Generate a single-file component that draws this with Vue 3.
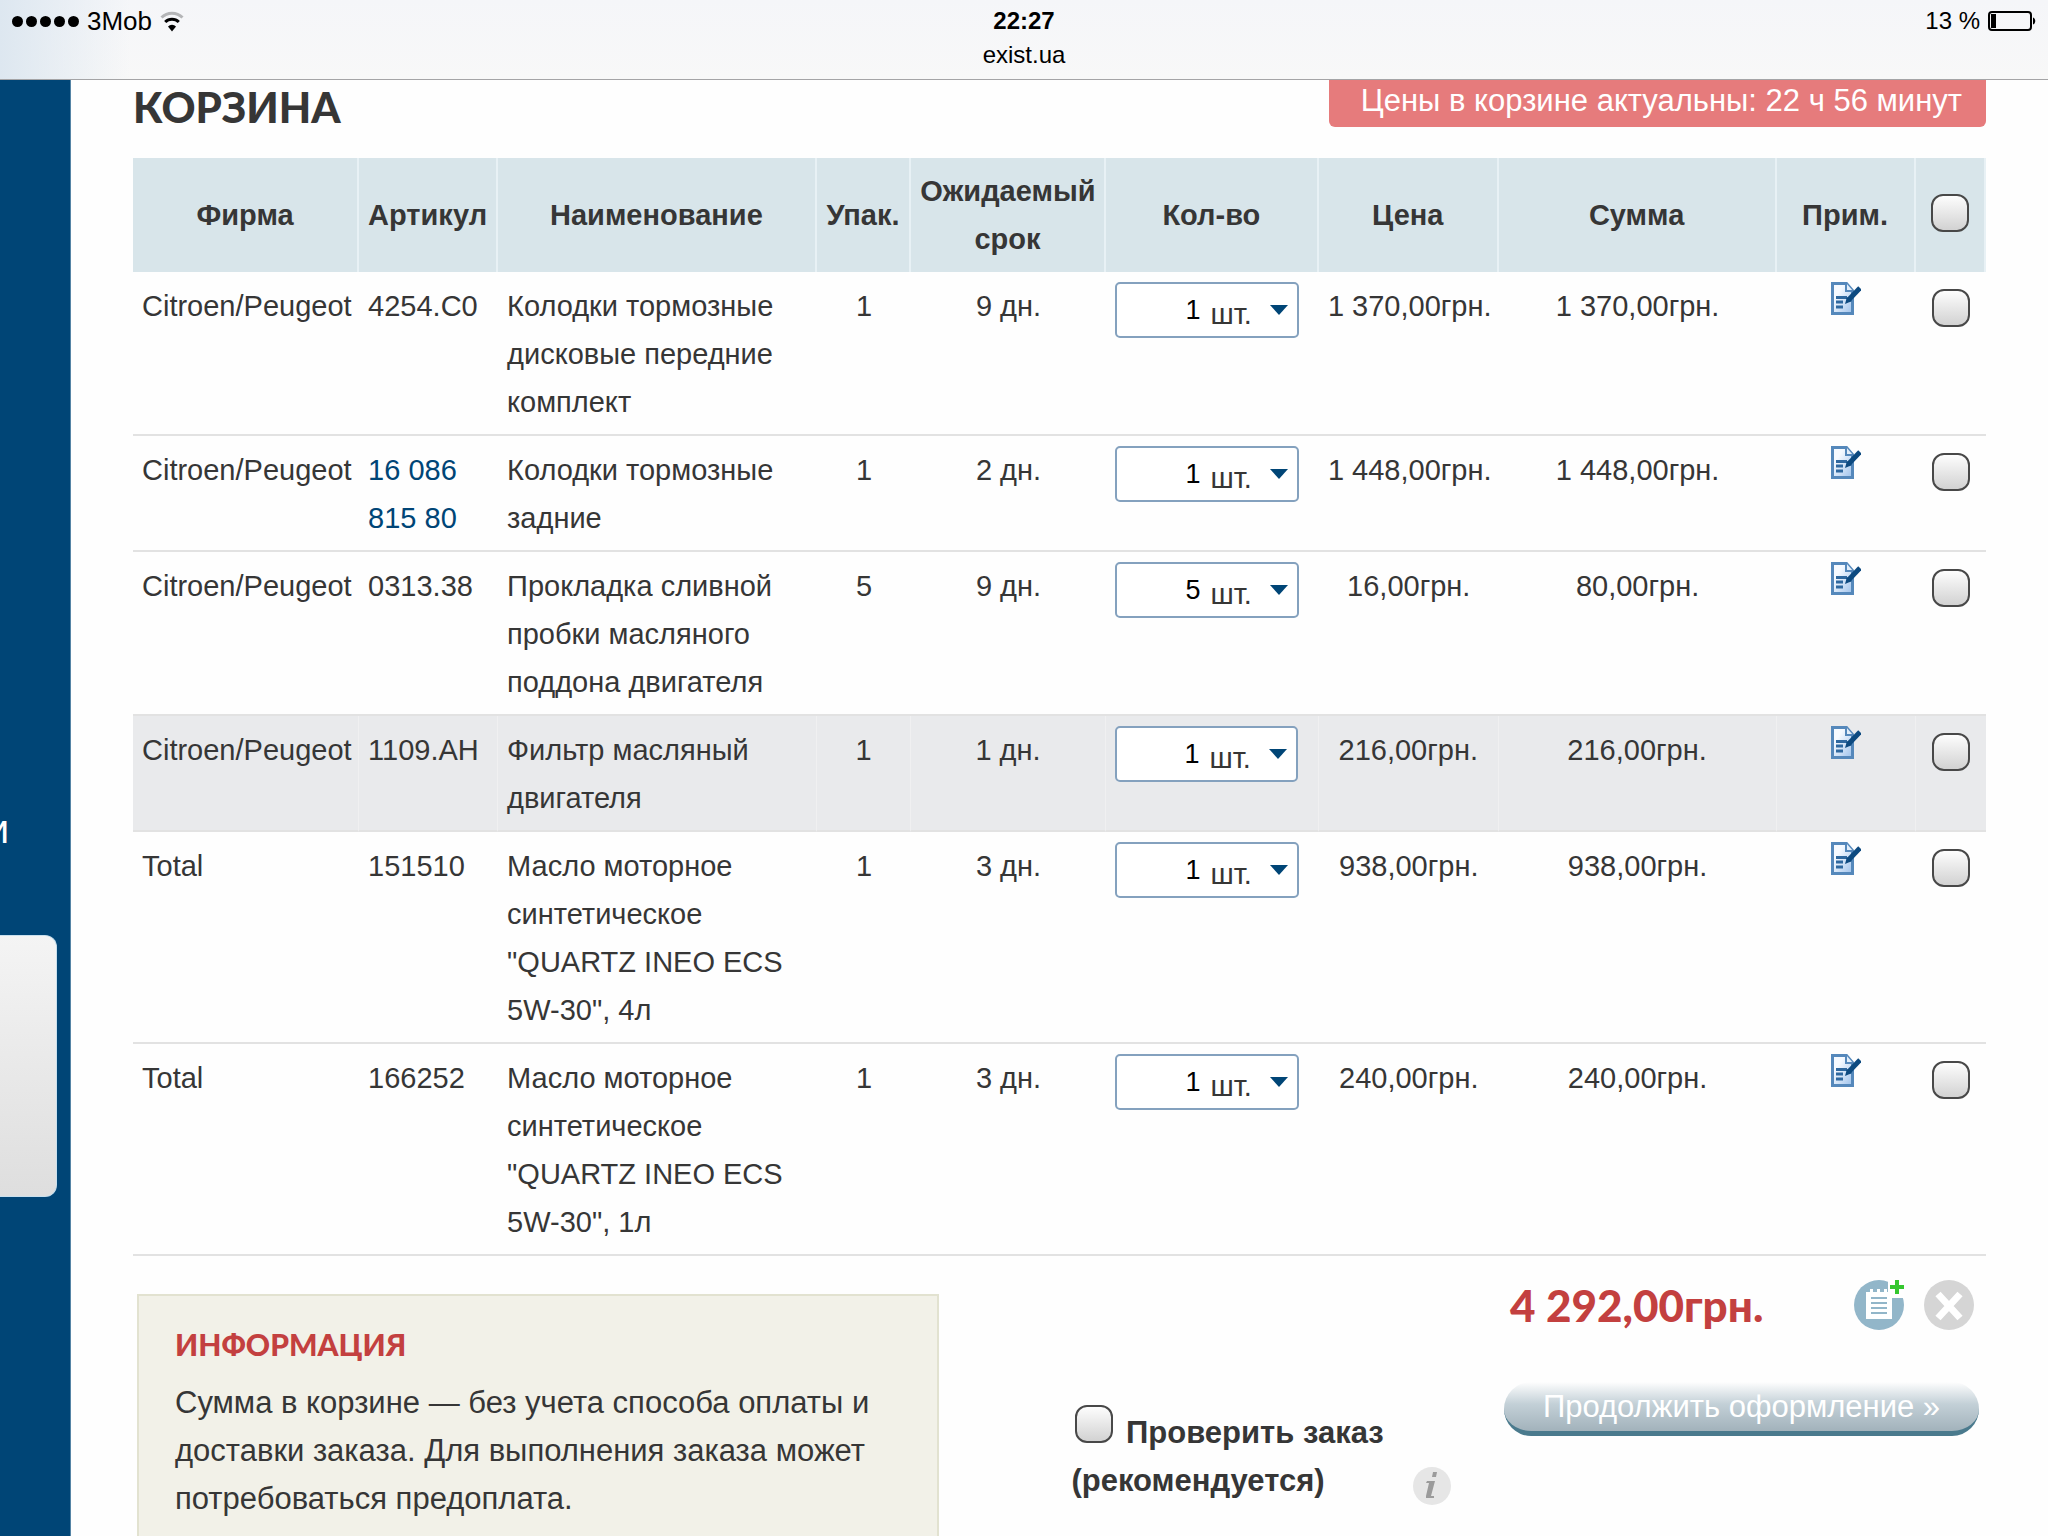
<template>
  <div class="screen">
    <header class="browser-bar">
      <div class="status">
        <div class="carrier">
          <span class="signal"><i v-for="n in 5" :key="n"></i></span>
          <span>3Mob</span>
          <svg class="wifi" viewBox="0 0 24 24" width="24" height="24" aria-hidden="true">
            <path d="M1.5 8.5a15 15 0 0 1 21 0" fill="none" stroke="#b4b5b7" stroke-width="3" />
            <path d="M5.2 13a9.6 9.6 0 0 1 13.6 0" fill="none" stroke="#000" stroke-width="3" />
            <path d="M12 22.5l-4-5a5.6 5.6 0 0 1 8 0z" />
          </svg>
        </div>
        <strong class="clock">22:27</strong>
        <div class="battery">
          <span>13 %</span>
          <svg viewBox="0 0 48 20" width="48" height="20" aria-hidden="true">
            <rect x="1" y="1" width="42" height="18" rx="3" fill="none" stroke="#000" stroke-width="2" />
            <rect x="3" y="3" width="5" height="14" />
            <path d="M45 6.5c3 1 3 6 0 7z" />
          </svg>
        </div>
      </div>
      <div class="address">exist.ua</div>
    </header>

    <div class="page">
      <aside class="sidebar">
        <div class="sidebar-label">и</div>
        <div class="sidebar-card"></div>
      </aside>

      <main class="content">
        <div class="title-row">
          <h1>КОРЗИНА</h1>
          <div class="notice">Цены в корзине актуальны: 22 ч 56 минут</div>
        </div>

        <table class="cart">
          <colgroup>
            <col v-for="(width, i) in columns" :key="i" :style="{ width: width + '%' }" />
          </colgroup>
          <thead>
            <tr>
              <th>Фирма</th>
              <th>Артикул</th>
              <th>Наименование</th>
              <th>Упак.</th>
              <th>Ожидаемый срок</th>
              <th>Кол-во</th>
              <th>Цена</th>
              <th>Сумма</th>
              <th>Прим.</th>
              <th class="check"><input v-model="allSelected" type="checkbox" aria-label="Выбрать все" /></th>
            </tr>
          </thead>
          <tbody>
            <tr v-for="item in items" :key="item.id" :class="{ active: item.active }">
              <td class="nowrap">{{ item.firm }}</td>
              <td>
                <a v-if="item.link" href="#">{{ item.article }}</a>
                <template v-else>{{ item.article }}</template>
              </td>
              <td>{{ item.name }}</td>
              <td class="center">{{ item.pack }}</td>
              <td class="center">{{ item.term }}</td>
              <td class="qty-cell">
                <div class="qty">
                  <input v-model="item.qty" type="text" aria-label="Количество" />
                  <span class="unit">шт.</span>
                  <button type="button" class="arrow" aria-label="Изменить количество">
                    <svg viewBox="0 0 18 10" width="18" height="10"><path d="M0 0h18l-9 10z" fill="#004576" /></svg>
                  </button>
                </div>
              </td>
              <td class="center nowrap">{{ item.price }}</td>
              <td class="center nowrap">{{ item.sum }}</td>
              <td class="note-cell">
                <button type="button" class="icon-button" aria-label="Примечание">
                  <svg viewBox="0 0 30 33" width="30" height="33">
                    <defs>
                      <linearGradient id="sheet" x1="0" y1="0" x2="1" y2="1">
                        <stop offset="0.3" stop-color="#f6faff" />
                        <stop offset="1" stop-color="#9cc0ea" />
                      </linearGradient>
                    </defs>
                    <path d="M1.5 1.5h14l6 7v23h-20z" fill="url(#sheet)" stroke="#5588bb" stroke-width="3" />
                    <path d="M15 1v8h7" fill="#e4effa" stroke="#5588bb" stroke-width="2" />
                    <path d="M5 15.5h11M5 20h7M5 25h7" stroke="#2f689f" stroke-width="3" />
                    <path d="M29 6L17 18.500" stroke="#0d4a80" stroke-width="5" />
                    <path d="M16 15l-2 7 7-3z" fill="#0d4a80" />
                  </svg>
                </button>
              </td>
              <td class="check"><input v-model="item.selected" type="checkbox" :aria-label="'Выбрать ' + item.article" /></td>
            </tr>
          </tbody>
        </table>

        <div class="summary">
          <section class="info">
            <h2>ИНФОРМАЦИЯ</h2>
            <p>Сумма в корзине — без учета способа оплаты и доставки заказа. Для выполнения заказа может потребоваться предоплата.</p>
          </section>

          <div class="verify">
            <label for="verify">
              <input id="verify" v-model="verify" type="checkbox" />
              Проверить заказ (рекомендуется)
            </label>
            <button type="button" class="icon-button" aria-label="Подсказка">
              <svg viewBox="0 0 38 38" width="38" height="38">
                <circle cx="19" cy="19" r="19" fill="#e6e6e6" />
                <path d="M20 5h4l-1 5h-4z" fill="#9b9b9b" />
                <path d="M14 14h8l-4 15h3v2h-8v-2l3-13h-3z" fill="#9b9b9b" />
              </svg>
            </button>
          </div>

          <div class="checkout">
            <div class="total-row">
              <strong class="total">4 292,00грн.</strong>
              <button type="button" class="icon-button" aria-label="Сохранить список">
                <svg viewBox="0 0 50 50" width="50" height="50">
                  <circle cx="25" cy="25" r="25" fill="#92b6c9" />
                  <path d="M34 0h16v18H38v-4h-4z" fill="#fff" />
                  <path d="M12 12h4v-3h3v3h4v-3h3v3h4v-3h3v3h5v27H12z" fill="#fff" />
                  <path d="M17 18h16M17 23h16M17 28h16M17 33h16" stroke="#92b6c9" stroke-width="2" />
                  <path d="M41 0h4v5h5v4h-5v5h-4V9h-5V5h5z" fill="#35c72f" />
                </svg>
              </button>
              <button type="button" class="icon-button" aria-label="Удалить">
                <svg viewBox="0 0 50 50" width="50" height="50">
                  <circle cx="25" cy="25" r="25" fill="#d5d5d5" />
                  <path d="M14 14l22 24M36 14L14 38" stroke="#fff" stroke-width="7" />
                </svg>
              </button>
            </div>
            <button type="button" class="proceed">Продолжить оформление »</button>
          </div>
        </div>
      </main>
    </div>
  </div>
</template>

<script setup>
import { ref } from "vue";

const allSelected = ref(false);
const verify = ref(false);

// Column widths, percent of the table
const columns = [12.2, 7.5, 17.2, 5.1, 10.5, 11.5, 9.7, 15, 7.5, 3.8];

const items = ref([
  { id: 1, firm: "Citroen/Peugeot", article: "4254.C0", name: "Колодки тормозные дисковые передние комплект", pack: 1, term: "9 дн.", qty: 1, price: "1 370,00грн.", sum: "1 370,00грн.", selected: false },
  { id: 2, firm: "Citroen/Peugeot", article: "16 086 815 80", link: true, name: "Колодки тормозные задние", pack: 1, term: "2 дн.", qty: 1, price: "1 448,00грн.", sum: "1 448,00грн.", selected: false },
  { id: 3, firm: "Citroen/Peugeot", article: "0313.38", name: "Прокладка сливной пробки масляного поддона двигателя", pack: 5, term: "9 дн.", qty: 5, price: "16,00грн.", sum: "80,00грн.", selected: false },
  { id: 4, firm: "Citroen/Peugeot", article: "1109.AH", name: "Фильтр масляный двигателя", pack: 1, term: "1 дн.", qty: 1, price: "216,00грн.", sum: "216,00грн.", selected: false, active: true },
  { id: 5, firm: "Total", article: "151510", name: "Масло моторное синтетическое \"QUARTZ INEO ECS 5W-30\", 4л", pack: 1, term: "3 дн.", qty: 1, price: "938,00грн.", sum: "938,00грн.", selected: false },
  { id: 6, firm: "Total", article: "166252", name: "Масло моторное синтетическое \"QUARTZ INEO ECS 5W-30\", 1л", pack: 1, term: "3 дн.", qty: 1, price: "240,00грн.", sum: "240,00грн.", selected: false },
]);
</script>

<style>
html,
body,
#app {
  height: 100%;
}
body {
  margin: 0;
  background: #fefefe;
}
</style>

<style scoped>
.screen {
  display: flex;
  flex-direction: column;
  height: 100%;
  overflow: hidden;
  color: #363636;
  font-family: "Liberation Sans", Arial, sans-serif;
  font-size: 29px;
  line-height: 48px;
}
* {
  box-sizing: border-box;
}

/* Browser bar */
.browser-bar {
  flex: none;
  height: 80px;
  border-bottom: 1px solid #a4a4a6;
  background: linear-gradient(90deg, #dde7f0 0, rgba(247, 247, 248, 0) 130px), linear-gradient(#f5f6f9, #f8f8f8);
  color: #000;
  font-size: 24px;
  line-height: 34px;
}
.status {
  display: grid;
  grid-template-columns: 1fr auto 1fr;
  align-items: center;
  height: 42px;
  padding: 0 12px;
}
.carrier,
.battery,
.signal {
  display: flex;
  align-items: center;
}
.carrier {
  gap: 8px;
  font-size: 26px;
}
.signal {
  gap: 3px;
}
.signal i {
  width: 11px;
  height: 11px;
  border-radius: 50%;
  background: #000;
}
.battery {
  justify-content: flex-end;
  gap: 8px;
}
.address {
  line-height: 26px;
  text-align: center;
}

/* Page */
.page {
  display: flex;
  flex: 1;
  min-height: 0;
}
.sidebar {
  display: flex;
  flex: none;
  flex-direction: column;
  align-items: flex-start;
  width: 71px;
  padding-top: 725px;
  border-right: 1px solid #5584a5;
  background: #004576;
  overflow: hidden;
}
.sidebar-label {
  display: flex;
  justify-content: flex-end;
  width: 9px;
  color: #fff;
  font-size: 40px;
}
.sidebar-card {
  width: 57px;
  height: 262px;
  margin-top: 82px;
  border: 1px solid #c9e0ee;
  border-left: 0;
  border-radius: 0 12px 12px 0;
  background: linear-gradient(#f4f4f4, #dedede);
}
.content {
  flex: 1;
  min-width: 0;
  padding: 0 62px;
}
.title-row {
  display: flex;
  justify-content: space-between;
  align-items: flex-start;
  height: 78px;
}
h1,
h2,
.total {
  font-family: Lato, "Open Sans", sans-serif;
  font-weight: 900;
}
h1 {
  margin: 0;
  font-size: 42px;
  line-height: 54px;
}
.notice {
  height: 47px;
  padding: 0 24px 0 32px;
  border-radius: 0 0 6px 6px;
  background: #e67b7c;
  color: #fff;
  font-size: 31px;
  line-height: 42px;
}

/* Cart */
.cart {
  width: 100%;
  border-collapse: separate;
  border-spacing: 0;
  table-layout: fixed;
}
th {
  height: 114px;
  padding: 9px;
  border-right: 2px solid #e8f1f5;
  background: #d8e5ea;
}
td {
  padding: 10px 9px 8px;
  border-bottom: 2px solid #e2e2e2;
  vertical-align: top;
}
.active td {
  border-right: 1px solid #f0f0f1;
  background: #e9eaec;
}
.active td:last-child {
  border-right: 0;
}
td a {
  color: #004576;
  text-decoration: none;
}
.center {
  text-align: center;
}
.nowrap {
  white-space: nowrap;
}
.qty-cell {
  padding-right: 20px;
}
.qty {
  display: flex;
  align-items: center;
  height: 56px;
  padding-right: 9px;
  border: 2px solid #84a1be;
  border-radius: 5px;
  background: #fff;
}
.qty input {
  flex: 1;
  min-width: 0;
  height: 52px;
  padding: 0;
  border: 0;
  background: none;
  color: #000;
  font: inherit;
  font-size: 27px;
  text-align: right;
}
.unit {
  padding: 8px 18px 0 10px;
}
.arrow,
.icon-button {
  display: inline-flex;
  padding: 0;
  border: 0;
  background: none;
}
.note-cell {
  text-align: center;
  line-height: 0;
}
th.check,
td.check {
  padding-right: 0;
  padding-left: 0;
  text-align: center;
  line-height: 0;
}
th.check {
  padding-bottom: 13px;
}
td.check {
  padding-top: 17px;
}
input[type="checkbox"] {
  width: 38px;
  height: 38px;
  margin: 0;
  border: 2px solid #484848;
  border-radius: 12px;
  background: linear-gradient(#fdfdfd, #d2d2d2);
  appearance: none;
}

/* Summary */
.summary {
  display: flex;
  padding-left: 4px;
}
.info {
  flex: none;
  width: 43.4%;
  height: 300px;
  margin-top: 38px;
  padding: 24px 36px;
  border: 2px solid #e2e2d0;
  background: #f2f1e8;
}
h2 {
  margin: 0 0 11px;
  color: #c3403f;
  font-size: 30px;
}
.info p {
  margin: 0;
  font-size: 31px;
}
.verify {
  display: flex;
  flex: 1;
  align-items: flex-end;
  align-self: flex-start;
  gap: 10px;
  margin-top: 149px;
  padding-left: 132px;
  font-size: 31px;
  font-weight: bold;
}
.verify label {
  width: 332px;
}
.verify input {
  margin: 0 4px;
}
.checkout {
  width: 482px;
  padding: 24px 7px 0 0;
}
.total-row {
  display: flex;
  align-items: center;
  gap: 20px;
  padding-right: 5px;
}
.total {
  flex: 1;
  padding-left: 6px;
  color: #c3403f;
  font-size: 44px;
}
.proceed {
  width: 100%;
  height: 54px;
  margin-top: 52px;
  padding: 0;
  border: 0;
  border-bottom: 5px solid #4a7a8d;
  border-radius: 27px;
  background: linear-gradient(#fefefe, #c3d0d7 45%, #a2b2bb);
  color: #fff;
  font: inherit;
  font-size: 31px;
}
</style>
